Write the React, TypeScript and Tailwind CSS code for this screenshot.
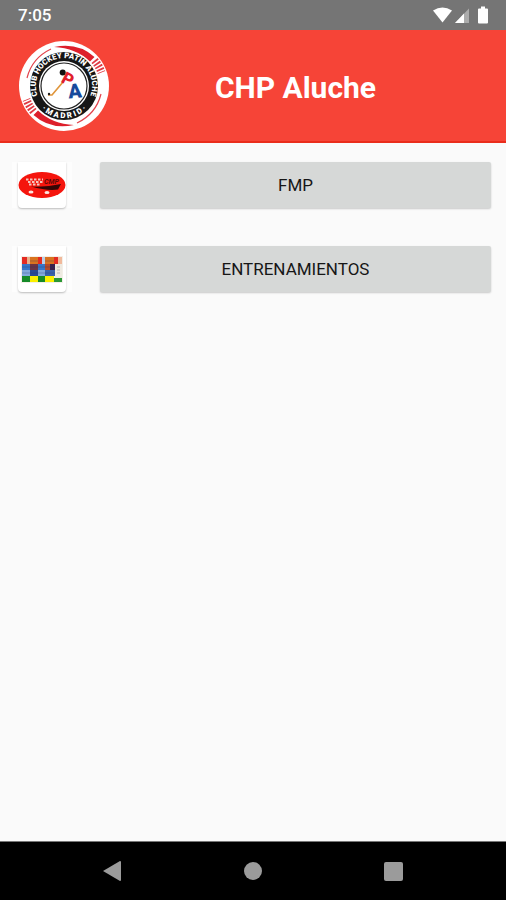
import React from "react";

function RedBand() {
  return (
    <>
      <path d="M36 7Q60 2 76.500 17L72 21.500Q58 8 36 7Z" fill="#dd1f2b" />
      <path d="M76.500 20.500A40 40 0 0 1 83.500 32.500" fill="none" stroke="#e03a43" strokeWidth="8" strokeDasharray="1.8 1.500" />
      <path d="M9 38Q14 18 33 9" fill="none" stroke="#e2434c" strokeWidth="1.200" />
    </>
  );
}

function ClubLogo() {
  return (
    <svg viewBox="0 0 92 92" className="h-[92px] w-[92px] shrink-0" role="img" aria-label="Club Hockey Patín Aluche Madrid">
      <defs>
        <path id="ringTop" d="M24.800 64.300A28 28 0 1 1 67.200 64.300" />
        <path id="ringBottom" d="M15 55A32.300 32.300 0 0 0 77 55" />
      </defs>
      <circle cx="46" cy="46" r="45" fill="#fff" />
      <RedBand />
      <g transform="rotate(180 46 46)">
        <RedBand />
      </g>
      <circle cx="46" cy="46" r="34" fill="#161616" />
      <circle cx="46" cy="46" r="25" fill="#fff" />
      <circle cx="46" cy="46" r="23" fill="#fff" stroke="#222" strokeWidth="1.200" />
      <g fill="#fff" fontFamily="Roboto, sans-serif" fontWeight="900">
        <text fontSize="7.800" textAnchor="middle">
          <textPath href="#ringTop" startOffset="50%">CLUB HOCKEY PATÍN ALUCHE</textPath>
        </text>
        <text fontSize="8" textAnchor="middle">
          <textPath href="#ringBottom" startOffset="50%">· M A D R I D ·</textPath>
        </text>
      </g>
      <path d="M45 42L34 55L30 55" fill="none" stroke="#e0963c" strokeWidth="1.700" />
      <circle cx="44.700" cy="32.500" r="3" fill="#111" />
      <circle cx="31" cy="54" r="1.200" fill="#222" />
      <g fontFamily="Roboto, sans-serif" fontWeight="900" textAnchor="middle">
        <text x="50" y="45" fontSize="17" fill="#e0202c" transform="rotate(28 50 39)">P</text>
        <text x="57" y="58" fontSize="20" fill="#174a9c" transform="rotate(-5 57 51)">A</text>
      </g>
    </svg>
  );
}

function FmpArt() {
  return (
    <svg viewBox="0 0 48 28" className="w-full" aria-hidden="true">
      <ellipse cx="24" cy="14" rx="23.500" ry="13" fill="#f5150d" />
      <g fill="none" stroke="#f3c6bd" strokeWidth="1.800" strokeDasharray="2.500 1.500">
        <path d="M8 8.500H25M10 11H25M11 13.500H23" />
      </g>
      <text x="26" y="12.500" fontSize="7" fontStyle="italic" fontWeight="700" fontFamily="Roboto, sans-serif" fill="#5e0907">CMP</text>
      <path d="M13 15.500Q27 16.500 43 13L40 18.500Q29 20 13 15.500Z" fill="#360706" />
      <ellipse cx="13" cy="21" rx="2.500" ry="1.600" fill="#fbe6df" />
      <ellipse cx="29" cy="21.500" rx="2.500" ry="1.600" fill="#fbe6df" />
    </svg>
  );
}

const cells: [number, number, number, number, string][] = [
  [0, 0, 5, 7, "#e32b22"], [5, 0, 3, 7, "#e9b08a"], [8, 0, 8, 7, "#d9731f"], [16, 0, 4, 7, "#e32b22"],
  [20, 0, 3, 7, "#b9cfe8"], [23, 0, 9, 7, "#d9731f"], [32, 0, 4, 7, "#e32b22"], [36, 0, 4, 7, "#f1b99b"],
  [0, 7, 8, 6, "#3675c7"], [8, 7, 8, 6, "#6b3344"], [16, 7, 7, 6, "#3675c7"], [23, 7, 5, 6, "#b54a28"], [28, 7, 5, 6, "#38204b"],
  [0, 13, 8, 6, "#82a9dc"], [8, 13, 8, 6, "#294b94"], [16, 13, 7, 6, "#82a9dc"], [23, 13, 10, 6, "#3b63aa"],
  [33, 7, 7, 14, "#eeeae1"],
  [0, 19, 8, 6, "#168a28"], [8, 19, 8, 6, "#fbf000"], [16, 19, 7, 6, "#168a28"], [23, 19, 9, 6, "#fbf000"], [32, 21, 8, 4, "#2a9835"],
];

function ScheduleArt() {
  return (
    <svg viewBox="0 0 42 27" className="w-[42px]" aria-hidden="true">
      <rect width="42" height="27" fill="#f3efe8" />
      <g transform="translate(1 1)">
        {cells.map(([x, y, w, h, fill]) => (
          <rect key={`${x}-${y}`} x={x} y={y} width={w} height={h} fill={fill} />
        ))}
        <path d="M0 10H33M0 16H33M8 4H16M23 4H32" stroke="#23366b" strokeWidth=".6" opacity=".5" />
        <path d="M35 10H38M35 13H38M35 16H38" stroke="#aaa" strokeWidth=".8" />
      </g>
    </svg>
  );
}

function MenuRow({ label, children }: { label: string; children: React.ReactNode }) {
  return (
    <li className="flex items-center gap-7">
      <div className="bg-white/50 px-1.5">
        <div className="flex h-[46px] w-12 items-center justify-center rounded-b bg-white shadow-[0_1px_2px_rgba(0,0,0,0.25)]">
          {children}
        </div>
      </div>
      <button
        type="button"
        className="h-[46px] min-w-0 flex-1 rounded-xs bg-[#d6d8d7] text-[17px] leading-6 text-[#161616] shadow-[0_1px_2px_rgba(0,0,0,0.2)]"
      >
        {label}
      </button>
    </li>
  );
}

function StatusBar() {
  return (
    <div className="flex h-[30px] items-center justify-between bg-[#757575] pr-4 pl-[18px] text-white">
      <time className="text-[17px] leading-6 font-medium">7:05</time>
      <svg viewBox="0 0 58 20" className="h-5 w-[58px]" fill="#fff" aria-hidden="true">
        <path d="M1 5.500Q10.500 -.5 20 5.500L10.500 17.500Z" />
        <path d="M23 18L37 3.500V18Z" opacity=".4" />
        <path d="M23 18L32 8.500V18Z" />
        <path d="M49 1.500h4v2h2q1 0 1 1v13q0 1-1 1h-8q-1 0-1-1v-13q0-1 1-1h2z" />
      </svg>
    </div>
  );
}

export default function App() {
  return (
    <div className="flex min-h-screen flex-col bg-[#fafafa] font-[Roboto,'Noto_Sans',sans-serif]">
      <StatusBar />
      <header className="flex h-[113px] items-center border-b-2 border-[#ea2d1c] bg-[#f64437] pr-[25px] pl-[18px] text-white">
        <ClubLogo />
        <h1 className="min-w-0 flex-1 pt-1 text-center text-[30px] leading-9 font-bold">CHP Aluche</h1>
      </header>
      <main className="flex-1 pt-[19px] pr-[15px] pl-3">
        <ul className="flex flex-col gap-[38px]">
          <MenuRow label="FMP"><FmpArt /></MenuRow>
          <MenuRow label="ENTRENAMIENTOS"><ScheduleArt /></MenuRow>
        </ul>
      </main>
      <nav aria-label="System navigation" className="grid h-[59px] grid-cols-3 border-t border-[#777] bg-black px-[42px]">
        <button type="button" aria-label="Back" className="flex items-center justify-center">
          <svg viewBox="0 0 20 22" className="h-[22px] w-5" fill="#9b9b9b"><path d="M1 11L18 1Q19 1 19 2V20Q19 21 18 21Z" /></svg>
        </button>
        <button type="button" aria-label="Home" className="flex items-center justify-center">
          <span className="h-[18px] w-[18px] rounded-full bg-[#9b9b9b]" />
        </button>
        <button type="button" aria-label="Recent apps" className="flex items-center justify-center">
          <span className="h-[19px] w-[19px] rounded-xs bg-[#9b9b9b]" />
        </button>
      </nav>
    </div>
  );
}
